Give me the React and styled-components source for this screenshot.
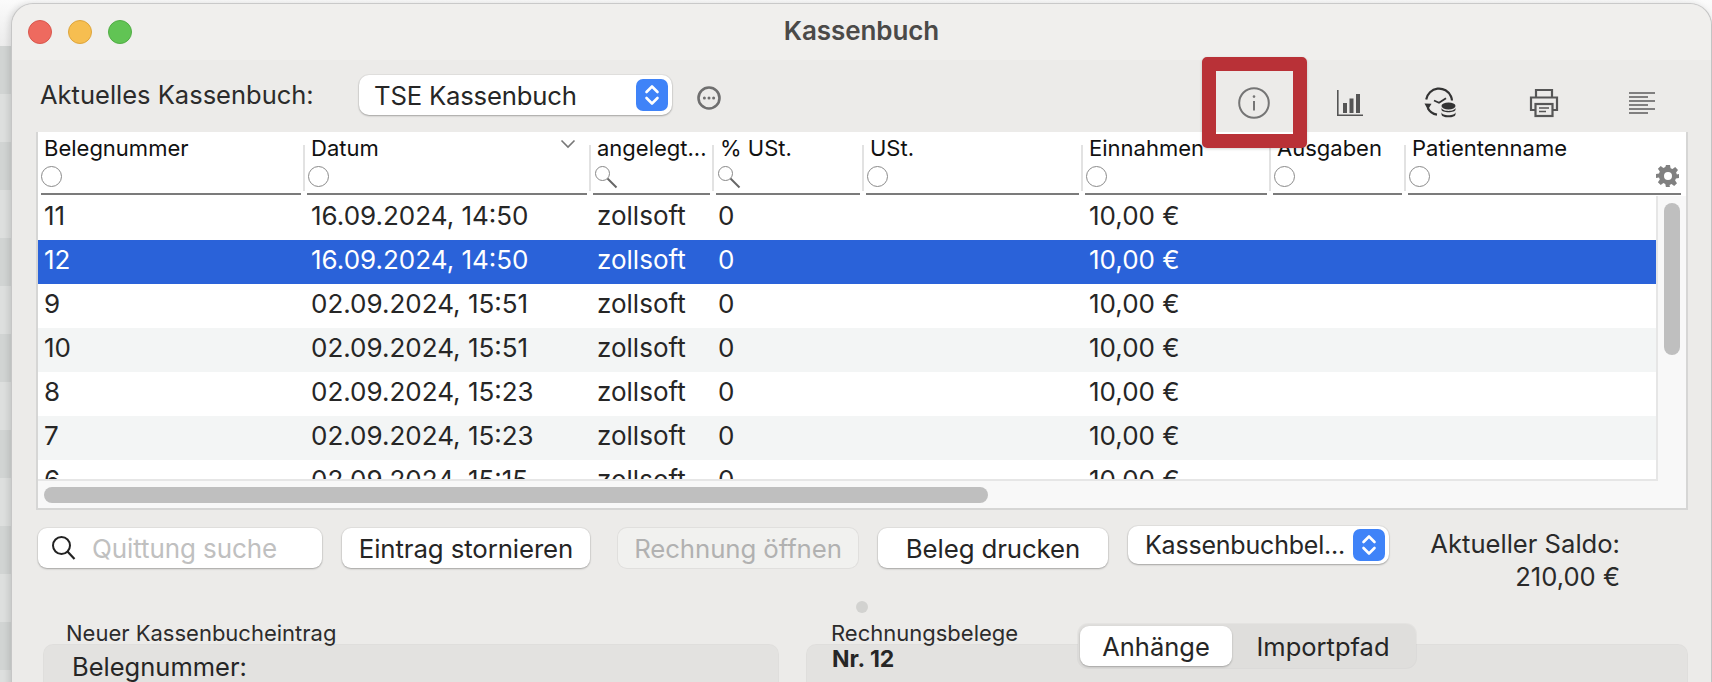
import React from "react";
import styled, { createGlobalStyle } from "styled-components";

const Global = createGlobalStyle`
  html, body { margin: 0; padding: 0; height: 682px; overflow: hidden; background: #fbfbfb; }
  body { font-family: "Inter", "Liberation Sans", sans-serif; color: #222; }
  #root { height: 682px; overflow: hidden; }
`;
const Desk = styled.div`
  height: 682px; padding: 3px 0 0 11px; box-sizing: border-box; overflow: hidden;
  background:
    linear-gradient(180deg, #fbfbfb, #ececec) 0 0 / 100% 46px no-repeat,
    repeating-linear-gradient(180deg, #d1d4d3 0 48px, #dddfde 48px 96px) 0 46px;
`;
const Win = styled.div`
  position: relative; width: 1701px; height: 760px; box-sizing: border-box;
  background: #ecebe9; border-radius: 22px 22px 0 0;
  border-top: 1px solid #c9c9c9; border-left: 1px solid #c6c6c6; border-right: 1px solid #c4c4c4;
  box-shadow: -2px 0 6px rgba(0,0,0,.12);
`;
const TitleBar = styled.div`
  height: 56px; background: #f0efed; border-radius: 22px 22px 0 0;
  display: grid; grid-template-columns: 1fr auto 1fr; align-items: center;
`;
const Lights = styled.div`display: flex; gap: 16px; padding-left: 16px;`;
const Light = styled.span`
  width: 24px; height: 24px; border-radius: 50%; box-sizing: border-box;
  background: ${p => p.$c}; border: 1px solid ${p => p.$b};
`;
const Title = styled.div`font-size: 26px; font-weight: 600; color: #4b4a48; margin-top: -4px; letter-spacing: -0.1px;`;

const Toolbar = styled.div`
  height: 72px; display: flex; align-items: flex-start; padding: 15px 33px 0 28px; box-sizing: border-box;
`;
const ToolLabel = styled.div`width: 319px; line-height: 40px; font-size: 25.5px; color: #2b2b2b; white-space: nowrap;`;
const SelectBox = styled.div`
  width: ${p => p.$w}px; height: ${p => p.$h}px; flex: none; box-sizing: border-box;
  display: flex; align-items: center; justify-content: space-between;
  padding: 0 4px 0 ${p => p.$pl}px; background: #fff; border-radius: 10px;
  font-size: ${p => p.$fs}px; color: #262626; letter-spacing: -0.2px; white-space: nowrap;
  box-shadow: 0 1px 2px rgba(0,0,0,.28), 0 0 0 1px rgba(0,0,0,.04);
`;
const Stepper = styled.span`
  width: ${p => p.$w}px; height: 32px; border-radius: 7px; background: #3f83f8;
  display: flex; align-items: center; justify-content: center; flex: none;
`;
const More = styled.svg`
  margin: 11px 0 0 25px; width: 24px; height: 24px; display: block; flex: none;
`;
const IconGroup = styled.div`margin-left: auto; display: flex;`;
const IconSlot = styled.div`
  width: ${p => p.$w}px; height: 60px; display: flex; justify-content: center; padding-top: ${p => p.$t}px; box-sizing: border-box;
`;

const Frame = styled.div`
  margin-left: 24px; width: 1652px; height: 378px; box-sizing: border-box;
  background: #f8f8f8; border: 2px solid #d6d6d5; border-top: 0;
`;
const HeaderGrid = styled.div`
  display: grid; height: 64px; background: #fff;
  grid-template-columns: 266px 286px 123px 150px 219px 188px 135px 279px;
`;
const HeadCell = styled.div`
  position: relative; padding: 0 3px; box-sizing: border-box; min-width: 0;
  &::before {
    content: ""; display: ${p => (p.$first ? "none" : "block")};
    position: absolute; left: -1px; top: 13px; bottom: 5px; width: 2px; background: #e2e2e2;
  }
`;
const HeadInner = styled.div`
  height: 63px; box-sizing: border-box; border-bottom: 2px solid #7b7b7b; padding: 2px 0 0 ${p => p.$pl}px;
`;
const HeadText = styled.div`
  display: flex; justify-content: space-between; padding-right: 11px;
  font-size: 22px; line-height: 28px; color: #111; white-space: nowrap;
`;
const SortMark = styled.svg`margin-top: 5px; flex: none;`;
const Ring = styled.span`
  display: block; width: 21px; height: 21px; box-sizing: border-box; border-radius: 50%;
  border: 1px solid #8a8a8a; margin: 4px 0 0 -3px; background: #fff;
`;
const Lens = styled.svg`display: block; margin: 3px 0 0 -3px;`;
const Gear = styled.svg`position: absolute; right: 4px; top: 32px;`;

const Body = styled.div`display: flex; height: 283px;`;
const Rows = styled.div`
  width: 1620px; height: 285px; box-sizing: border-box; overflow: hidden; background: #fff;
  border-right: 2px solid #e6e6e6; border-bottom: 2px solid #e6e6e6;
`;
const Row = styled.div`
  display: grid; height: 44px; align-items: center;
  grid-template-columns: 266px 286px 123px 150px 219px 188px;
  font-size: 26px; line-height: 38px;
  background: ${p => (p.$sel ? "#2a62d9" : p.$alt ? "#f3f5f5" : "#fff")};
  color: ${p => (p.$sel ? "#fff" : "#262626")};
`;
const Cell = styled.div`padding-left: ${p => p.$pl}px; white-space: nowrap; margin-top: -4px;`;
const VTrack = styled.div`flex: 1; padding: 7px 4px 0 6px; box-sizing: border-box;`;
const VThumb = styled.div`width: 16px; height: 152px; border-radius: 8px; background: #bfbfbf;`;
const HTrack = styled.div`padding: 8px 0 0 6px;`;
const HThumb = styled.div`width: 944px; height: 16px; border-radius: 8px; background: #bfbfbf;`;

const Controls = styled.div`
  height: 109px; padding: 16px 0 0 26px; display: flex; align-items: flex-start; gap: 20px; box-sizing: border-box;
`;
const Search = styled.div`
  width: 284px; height: 40px; margin-top: 2px; box-sizing: border-box; background: #fff; border-radius: 9px;
  display: flex; align-items: center; gap: 15px; padding-left: 13px;
  box-shadow: 0 1px 2px rgba(0,0,0,.28), 0 0 0 1px rgba(0,0,0,.04);
  font-size: 26px; color: #c0c0c0; letter-spacing: -0.1px; white-space: nowrap;
`;
const Btn = styled.div`
  width: ${p => p.$w}px; height: 40px; margin-top: 2px; margin-left: ${p => p.$ml || 0}px; flex: none; border-radius: 9px; box-sizing: border-box;
  display: flex; align-items: center; justify-content: center; font-size: 25.8px; letter-spacing: -0.1px; white-space: nowrap;
  background: ${p => (p.$off ? "#f1f1ef" : "#fff")};
  color: ${p => (p.$off ? "#b1b1b1" : "#252525")};
  box-shadow: ${p => (p.$off ? "0 0 0 1px rgba(0,0,0,.05)" : "0 1px 2px rgba(0,0,0,.28), 0 0 0 1px rgba(0,0,0,.04)")};
`;
const Saldo = styled.div`
  margin-left: 11px; width: 200px; padding-top: 1px; text-align: right; font-size: 25.6px; line-height: 33px; color: #2a2a2a; white-space: nowrap; flex: none;
`;

const Lower = styled.div`
  display: grid; grid-template-columns: 736px 882px; column-gap: 27px; padding-left: 31px;
`;
const Section = styled.div`position: relative;`;
const Caption = styled.div`height: 25px; padding-left: ${p => p.$pl}px; font-size: 22px; line-height: 28px; color: #2c2c2c; white-space: nowrap;`;
const Panel = styled.div`
  height: 90px; background: #e3e2e0; border-radius: 10px 10px 0 0; box-shadow: inset 0 0 0 1px rgba(0,0,0,.015);
  padding: ${p => p.$pt}px 0 0 ${p => p.$pl}px; box-sizing: border-box;
  font-size: ${p => p.$fs}px; font-weight: ${p => p.$fw}; color: #262626; line-height: 28px;
`;
const Dot = styled.span`
  position: absolute; left: 50px; top: -18px; width: 12px; height: 12px; border-radius: 50%; background: #d2d2d0;
`;
const Segmented = styled.div`
  position: absolute; left: 272px; top: 5px; width: 338px; height: 44px; box-sizing: border-box; padding: 2px;
  border-radius: 10px; background: #dfdedc; display: flex; align-items: center;
  box-shadow: 0 0 0 1px rgba(0,0,0,.03);
`;
const Seg = styled.div`
  height: 40px; width: ${p => p.$w}px; border-radius: 9px; display: flex; align-items: center; justify-content: center;
  font-size: 25.5px; color: #262626;
  background: ${p => (p.$on ? "#fff" : "transparent")};
  box-shadow: ${p => (p.$on ? "0 1px 2px rgba(0,0,0,.28)" : "none")};
`;
const Highlight = styled.div`
  position: absolute; left: 1190px; top: 53px; width: 105px; height: 91px; box-sizing: border-box;
  border: 14px solid #b93137; border-radius: 5px;
  box-shadow: 0 1px 3px rgba(0,0,0,.18);
`;

const StepIcon = () => (
  <svg width="16" height="24" viewBox="0 0 16 24" fill="none" stroke="#fff" strokeWidth="2.6" strokeLinecap="round" strokeLinejoin="round">
    <path d="M2.5 9l5.5-5.5L13.5 9" /><path d="M2.5 15l5.5 5.5L13.5 15" />
  </svg>
);
const InfoIcon = () => (
  <svg width="32" height="32" viewBox="0 0 32 32" fill="none" stroke="#757575">
    <circle cx="16" cy="16" r="14.8" strokeWidth="2" />
    <path d="M16 14v9.5" strokeWidth="2" />
    <circle cx="16" cy="9.6" r="1.3" fill="#757575" stroke="none" />
  </svg>
);
const ChartIcon = () => (
  <svg width="28" height="28" viewBox="0 0 28 28" fill="#555">
    <path d="M1 1h1.6v24.4H27V27H1z" />
    <rect x="7" y="14" width="4" height="10" /><rect x="13.5" y="9.5" width="4" height="14.5" /><rect x="20" y="5" width="4" height="19" />
  </svg>
);
const ClockIcon = () => (
  <svg width="34" height="34" viewBox="0 0 34 34" fill="none" stroke="#333" strokeWidth="2.2">
    <path d="M3.2 13.5A13 13 0 0 1 28 10.5c.6 1.4.9 2.6 1 4" />
    <path d="M14 28.6c-4.2-.6-7.4-2.8-9.2-6.6" />
    <path d="M1.5 17.5l7 .2-3.6 6z" fill="#333" stroke="none" />
    <path d="M11 14.5l5 2.2 7-4.5" strokeWidth="1.8" />
    <ellipse cx="25.5" cy="20" rx="7" ry="3.4" fill="#333" stroke="none" />
    <path d="M18.5 21.5c0 4.5 14 4.5 14 0v2c0 3.6-14 3.6-14 0z" fill="#333" stroke="none" />
    <path d="M18.5 26c0 4.3 14 4.3 14 0v2.2c0 4.2-14 4.2-14 0z" fill="#333" stroke="none" />
  </svg>
);
const PrintIcon = () => (
  <svg width="30" height="30" viewBox="0 0 30 30" fill="none" stroke="#565656" strokeWidth="2.2">
    <path d="M7 9V2h16v7" />
    <path d="M6.5 22H2V9.5h26V22h-4.5" />
    <rect x="6.5" y="16" width="17" height="12" fill="#ecebe9" />
    <path d="M10 20h10M10 23.5h7" strokeWidth="1.4" />
  </svg>
);
const LinesIcon = () => (
  <svg width="28" height="24" viewBox="0 0 28 24" fill="none" stroke="#5c5c5c" strokeWidth="1.7">
    <path d="M1 2h26M1 6h19M1 10h26M1 14h19M1 18h26M1 22h19" />
  </svg>
);
const LensIcon = () => (
  <Lens width="24" height="24" viewBox="0 0 24 24" fill="none">
    <circle cx="8.5" cy="8.5" r="7" stroke="#888" strokeWidth="1" />
    <path d="M13.5 13.5l9 9" stroke="#666" strokeWidth="2" />
  </Lens>
);
const GearIcon = () => (
  <Gear width="24" height="24" viewBox="0 0 24 24">
    <path fill="#808080" fillRule="evenodd" d="M10 1h4l.6 3.2 1.9.8 2.7-1.9 2.8 2.8-1.9 2.7.8 1.9L23 10v4l-3.1.6-.8 1.9 1.9 2.7-2.8 2.8-2.7-1.9-1.9.8L13.9 23h-4l-.6-3.1-1.9-.8-2.7 1.9-2.8-2.8 1.9-2.7-.8-1.9L0 14v-4l3-.6.8-1.9L1.9 4.8l2.8-2.8 2.7 1.9 1.9-.8zM12 8a4 4 0 1 0 0 8 4 4 0 0 0 0-8z" />
  </Gear>
);
const SearchIcon = () => (
  <svg width="26" height="26" viewBox="0 0 26 26" fill="none" stroke="#222" strokeWidth="2">
    <circle cx="10.5" cy="10.5" r="8.5" /><path d="M16.5 16.5l7 7.5" strokeWidth="2.2" />
  </svg>
);
const MoreIcon = () => (
  <More viewBox="0 0 24 24" fill="none">
    <circle cx="12" cy="12" r="10.5" stroke="#6f6f6f" strokeWidth="2.6" />
    <circle cx="7.4" cy="12" r="1.5" fill="#6f6f6f" /><circle cx="12" cy="12" r="1.5" fill="#6f6f6f" /><circle cx="16.6" cy="12" r="1.5" fill="#6f6f6f" />
  </More>
);

const heads = [
  { t: "Belegnummer", f: "ring", pl: 3 },
  { t: "Datum", f: "ring", pl: 4, sort: true },
  { t: "angelegt...", f: "lens", pl: 4 },
  { t: "% USt.", f: "lens", pl: 4 },
  { t: "USt.", f: "ring", pl: 4 },
  { t: "Einnahmen", f: "ring", pl: 4 },
  { t: "Ausgaben", f: "ring", pl: 4 },
  { t: "Patientenname", f: "ring", pl: 4 },
];
const rows = [
  ["11", "16.09.2024, 14:50"],
  ["12", "16.09.2024, 14:50", true],
  ["9", "02.09.2024, 15:51"],
  ["10", "02.09.2024, 15:51"],
  ["8", "02.09.2024, 15:23"],
  ["7", "02.09.2024, 15:23"],
  ["6", "02.09.2024, 15:15"],
];

export default function App() {
  return (
    <Desk>
      <Global />
      <Win>
        <TitleBar>
          <Lights>
            <Light $c="#ee6a5f" $b="#d9574d" />
            <Light $c="#f6be50" $b="#dea53c" />
            <Light $c="#61c454" $b="#51ad45" />
          </Lights>
          <Title>Kassenbuch</Title>
          <div />
        </TitleBar>
        <Toolbar>
          <ToolLabel>Aktuelles Kassenbuch:</ToolLabel>
          <SelectBox $w={313} $h={40} $pl={15} $fs={25.7}>
            TSE Kassenbuch
            <Stepper $w={32}><StepIcon /></Stepper>
          </SelectBox>
          <MoreIcon />
          <IconGroup>
            <IconSlot $w={96} $t={12}><InfoIcon /></IconSlot>
            <IconSlot $w={96} $t={14}><ChartIcon /></IconSlot>
            <IconSlot $w={84} $t={11}><ClockIcon /></IconSlot>
            <IconSlot $w={124} $t={13}><PrintIcon /></IconSlot>
            <IconSlot $w={72} $t={16}><LinesIcon /></IconSlot>
          </IconGroup>
        </Toolbar>
        <Frame>
          <HeaderGrid>
            {heads.map((h, i) => (
              <HeadCell key={h.t} $first={i === 0}>
                <HeadInner $pl={h.pl}>
                  <HeadText>
                    {h.t}
                    {h.sort && (
                      <SortMark width="16" height="10" viewBox="0 0 16 10" fill="none" stroke="#777" strokeWidth="1.6">
                        <path d="M1.5 1.5L8 8l6.5-6.5" />
                      </SortMark>
                    )}
                  </HeadText>
                  {h.f === "ring" ? <Ring /> : <LensIcon />}
                </HeadInner>
                {i === 7 && <GearIcon />}
              </HeadCell>
            ))}
          </HeaderGrid>
          <Body>
            <Rows>
              {rows.map(([n, d, sel], i) => (
                <Row key={i} $sel={sel} $alt={i === 3 || i === 5}>
                  <Cell $pl={6}>{n}</Cell>
                  <Cell $pl={7}>{d}</Cell>
                  <Cell $pl={7}>zollsoft</Cell>
                  <Cell $pl={5}>0</Cell>
                  <Cell $pl={0} />
                  <Cell $pl={7}>10,00 €</Cell>
                </Row>
              ))}
            </Rows>
            <VTrack><VThumb /></VTrack>
          </Body>
          <HTrack><HThumb /></HTrack>
        </Frame>
        <Controls>
          <Search><SearchIcon />Quittung suche</Search>
          <Btn $w={248}>Eintrag stornieren</Btn>
          <Btn $w={240} $ml={8} $off>Rechnung öffnen</Btn>
          <Btn $w={230}>Beleg drucken</Btn>
          <SelectBox $w={261} $h={38} $pl={17} $fs={25}>
            Kassenbuchbel...
            <Stepper $w={32}><StepIcon /></Stepper>
          </SelectBox>
          <Saldo>Aktueller Saldo:<br />210,00 €</Saldo>
        </Controls>
        <Lower>
          <Section>
            <Caption $pl={23}>Neuer Kassenbucheintrag</Caption>
            <Panel $pt={9} $pl={29} $fs={25.5} $fw={400}>Belegnummer:</Panel>
          </Section>
          <Section>
            <Dot />
            <Caption $pl={25}>Rechnungsbelege</Caption>
            <Panel $pt={1} $pl={26} $fs={23} $fw={700}>Nr. 12</Panel>
            <Segmented>
              <Seg $w={152} $on>Anhänge</Seg>
              <Seg $w={182}>Importpfad</Seg>
            </Segmented>
          </Section>
        </Lower>
        <Highlight />
      </Win>
    </Desk>
  );
}
